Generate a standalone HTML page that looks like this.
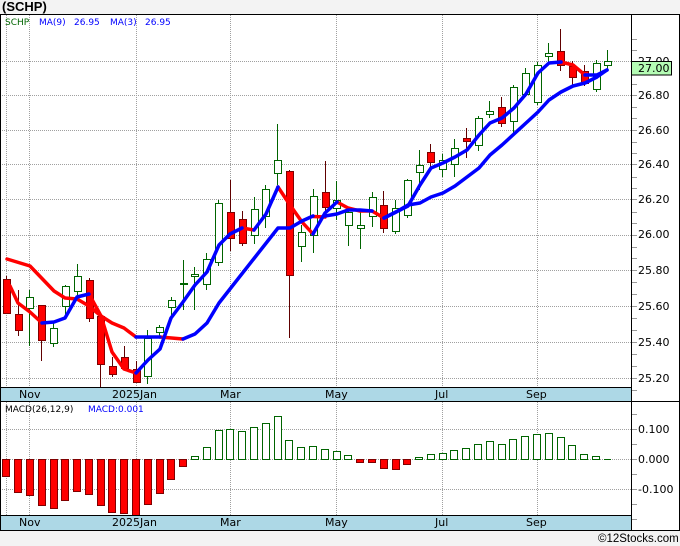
<!DOCTYPE html>
<html><head><meta charset="utf-8"><style>
html,body{margin:0;padding:0;background:#f3f3f3;width:680px;height:546px;overflow:hidden}
svg{display:block}
text{font-family:"DejaVu Sans",sans-serif;font-size:11px;fill:#000}
.s{font-size:9px}
</style></head><body>
<svg width="680" height="546" viewBox="0 0 680 546" xmlns="http://www.w3.org/2000/svg">
<rect width="680" height="546" fill="#f3f3f3"/>
<rect x="0" y="14" width="680" height="516" fill="#fff"/>
<rect x="0" y="388" width="632" height="13" fill="#add8e6"/>
<rect x="0" y="516" width="632" height="14" fill="#add8e6"/>
<path d="M0 61.5H632M0 95.5H632M0 130.5H632M0 164.5H632M0 199.5H632M0 235.5H632M0 270.5H632M0 306.5H632M0 342.5H632M0 378.5H632M0 429.5H632M0 459.5H632M0 489.5H632" stroke="#a0a0a0" stroke-dasharray="1 1" fill="none"/>
<path d="M6.5 15V387M29.5 15V387M136.5 15V387M230.5 15V387M336.5 15V387M442.5 15V387M537.5 15V387M6.5 402V515M29.5 402V515M136.5 402V515M230.5 402V515M336.5 402V515M442.5 402V515M537.5 402V515" stroke="#a0a0a0" stroke-dasharray="1 1" fill="none"/>
<path d="M632 39.5H637M632 50.5H637M632 61.5H637M632 73.5H637M632 84.5H637M632 95.5H637M632 107.5H637M632 118.5H637M632 130.5H637M632 142.5H637M632 153.5H637M632 164.5H637M632 177.5H637M632 188.5H637M632 199.5H637M632 212.5H637M632 223.5H637M632 235.5H637M632 247.5H637M632 258.5H637M632 270.5H637M632 282.5H637M632 294.5H637M632 306.5H637M632 318.5H637M632 330.5H637M632 342.5H637M632 354.5H637M632 366.5H637M632 378.5H637M632 390.5H637M632 414.5H637M632 429.5H637M632 444.5H637M632 459.5H637M632 474.5H637M632 489.5H637M632 504.5H637M632 519.5H637" stroke="#999" fill="none"/>

<!-- wicks -->
<path d="M29.5 290V346M53.5 322V347M65.5 285V316M77.5 264V300M147.5 330V384M159.5 325V337M171.5 297V320M183.5 260V310M194.5 267V310M206.5 253V290M218.5 200V266M254.5 197V244M265.5 185V228M277.5 124V185M301.5 225V262M313.5 189V253M336.5 181V220M348.5 208V246M360.5 212V249M372.5 192V227M395.5 200V234M407.5 179V218M419.5 150V190M442.5 154V177M454.5 139V177M478.5 116V151M489.5 101V118M513.5 85V134M525.5 68V97M537.5 62V105M548.5 43V63M596.5 60V92M607.5 50V69" stroke="#006400" fill="none"/>
<path d="M6.5 276V314M18.5 290V336M41.5 305V361M89.5 278V322M100.5 315V387M112.5 357V377M124.5 346V368M136.5 361V382M230.5 180V251M242.5 211V246M289.5 170V338M325.5 161V217M383.5 191V233M430.5 144V168M466.5 128V158M501.5 97V127M560.5 29V71M572.5 61V85M584.5 65V86" stroke="#600000" fill="none"/>
<!-- green bodies -->
<path d="M26.5 297.5h7v11h-7zM50.5 328.5h7v15h-7zM62.5 286.5h7v20h-7zM74.5 276.5h7v15h-7zM144.5 338.5h7v38h-7zM156.5 327.5h7v5h-7zM168.5 300.5h7v7h-7zM180.5 283.5h7v1h-7zM191.5 274.5h7v2h-7zM203.5 259.5h7v25h-7zM215.5 203.5h7v59h-7zM251.5 209.5h7v26h-7zM262.5 189.5h7v27h-7zM274.5 160.5h7v13h-7zM298.5 232.5h7v14h-7zM310.5 196.5h7v39h-7zM333.5 200.5h7v8h-7zM345.5 212.5h7v13h-7zM357.5 225.5h7v3h-7zM369.5 197.5h7v19h-7zM392.5 208.5h7v23h-7zM404.5 180.5h7v35h-7zM416.5 165.5h7v7h-7zM439.5 160.5h7v9h-7zM451.5 148.5h7v16h-7zM475.5 118.5h7v27h-7zM486.5 111.5h7v3h-7zM510.5 87.5h7v34h-7zM522.5 73.5h7v21h-7zM534.5 65.5h7v37h-7zM545.5 53.5h7v3h-7zM593.5 63.5h7v26h-7zM604.5 61.5h7v4h-7z" fill="#fff" stroke="#006400"/>
<!-- red bodies -->
<path d="M3.5 279.5h7v34h-7zM15.5 314.5h7v16h-7zM38.5 305.5h7v35h-7zM86.5 280.5h7v38h-7zM97.5 316.5h7v48h-7zM109.5 366.5h7v8h-7zM121.5 357.5h7v11h-7zM133.5 369.5h7v13h-7zM227.5 212.5h7v26h-7zM239.5 219.5h7v24h-7zM286.5 171.5h7v104h-7zM322.5 192.5h7v15h-7zM380.5 205.5h7v23h-7zM427.5 152.5h7v10h-7zM463.5 138.5h7v3h-7zM498.5 107.5h7v16h-7zM557.5 51.5h7v14h-7zM569.5 66.5h7v11h-7zM581.5 71.5h7v12h-7z" fill="#f00" stroke="#800000"/>

<!-- moving average lines -->
<g fill="none" stroke-width="3.5" stroke-linejoin="round" stroke-linecap="round">
<path d="M7 259L30 266L54 291L65 298L77 299L89 306L101 316L112 323L124 328L136 337" stroke="#f00"/>
<path d="M160 337L183 339" stroke="#f00"/>
<path d="M313 216.500L325 217" stroke="#f00"/>
<path d="M10 286L18 303L30 312L42 323" stroke="#f00"/>
<path d="M89 294L101 316L112 352L124 369L136 373" stroke="#f00"/>
<path d="M242 228L254 230" stroke="#f00"/>
<path d="M278 187L290 205L302 222L313 234" stroke="#f00"/>
<path d="M337 202L348 208L360 211L372 211L384 218" stroke="#f00"/>
<path d="M561 62L573 65L585 75" stroke="#f00"/>
<path d="M42 323L54 322L65 318L77 297L89 294" stroke="#00f"/>
<path d="M136 337L148 337L160 337" stroke="#00f"/>
<path d="M136 373L148 360L160 349L171 318L183 302L195 285L207 272L219 245L230 234L242 228" stroke="#00f"/>
<path d="M183 339L195 334L207 323L219 303L230 289L278 228L290 228L302 221L313 216" stroke="#00f"/>
<path d="M254 230L266 214L278 187" stroke="#00f"/>
<path d="M313 234L325 213L337 202" stroke="#00f"/>
<path d="M325 216L337 214L348 210L360 210L372 211" stroke="#00f"/>
<path d="M384 218L396 212L408 205L420 203L431 197L443 193L455 186L467 177L479 168L490 155L502 145L514 134L526 123L538 112L549 100L561 92L573 86L585 83L597 77L607 70" stroke="#00f"/>
<path d="M384 218L396 212L408 206L420 185L431 168L443 163L455 157L467 150L479 135L490 123L502 118L514 108L526 94L538 73L549 63L561 62" stroke="#00f"/>
<path d="M585 75L597 75L607 70" stroke="#00f"/>
</g>

<!-- MACD bars -->
<path d="M2.500 459.500h7v17h-7zM14.500 459.500h7v33h-7zM26.500 459.500h7v36h-7zM38.500 459.500h7v46h-7zM50.500 459.500h7v49h-7zM61.500 459.500h7v41h-7zM73.500 459.500h7v32h-7zM85.500 459.500h7v35h-7zM97.500 459.500h7v46h-7zM108.500 459.500h7v53h-7zM120.500 459.500h7v54h-7zM132.500 459.500h7v56h-7zM144.500 459.500h7v45h-7zM156.500 459.500h7v34h-7zM167.500 459.500h7v20h-7zM179.500 459.500h7v7h-7zM356.500 459.500h7v3h-7zM368.500 459.500h7v3h-7zM380.500 459.500h7v9h-7zM392.500 459.500h7v10h-7zM403.500 459.500h7v5h-7z" fill="#f00" stroke="#800000"/>
<path d="M191.500 456.500h7v3h-7zM203.500 447.500h7v12h-7zM215.500 430.500h7v29h-7zM226.500 429.500h7v30h-7zM238.500 431.500h7v28h-7zM250.500 427.500h7v32h-7zM262.500 423.500h7v36h-7zM274.500 416.500h7v43h-7zM285.500 440.500h7v19h-7zM297.500 447.500h7v12h-7zM309.500 446.500h7v13h-7zM321.500 449.500h7v10h-7zM333.500 451.500h7v8h-7zM344.500 455.500h7v4h-7zM415.500 457.500h7v2h-7zM427.500 454.500h7v5h-7zM439.500 453.500h7v6h-7zM450.500 450.500h7v9h-7zM462.500 448.500h7v11h-7zM474.500 444.500h7v15h-7zM486.500 441.500h7v18h-7zM498.500 444.500h7v15h-7zM509.500 439.500h7v20h-7zM521.500 436.500h7v23h-7zM533.500 434.500h7v25h-7zM545.500 433.500h7v26h-7zM557.500 437.500h7v22h-7zM568.500 445.500h7v14h-7zM580.500 454.500h7v5h-7zM592.500 456.500h7v3h-7z" fill="#fff" stroke="#006400"/>
<path d="M604 459.500h7" stroke="#006400"/>

<!-- frame -->
<g fill="#000">
<rect x="0" y="14" width="680" height="1"/>
<rect x="0" y="14" width="1" height="516"/>
<rect x="0" y="387" width="632" height="1"/>
<rect x="0" y="401" width="680" height="1"/>
<rect x="0" y="515" width="632" height="1"/>
<rect x="0" y="530" width="680" height="1"/>
<rect x="631" y="14" width="1" height="516"/>
<rect x="679" y="14" width="1" height="516"/>
</g>

<!-- text -->
<text x="2" y="11" style="font:bold 13px 'Liberation Sans',sans-serif;fill:#000">(SCHP)</text>
<text class="s" x="5" y="25" style="fill:#006400">SCHP</text>
<text class="s" x="39" y="25" style="fill:#0000ff">MA(9)</text>
<text class="s" x="74" y="25" style="fill:#0000ff">26.95</text>
<text class="s" x="110" y="25" style="fill:#0000ff">MA(3)</text>
<text class="s" x="145" y="25" style="fill:#0000ff">26.95</text>

<text x="638" y="65">27.00</text>
<rect x="631.500" y="61.500" width="40" height="13.500" fill="#b4fcb4" stroke="#000"/>
<text x="638" y="72">27.00</text>
<text x="638" y="99">26.80</text>
<text x="638" y="134">26.60</text>
<text x="638" y="168">26.40</text>
<text x="638" y="203">26.20</text>
<text x="638" y="238">26.00</text>
<text x="638" y="274">25.80</text>
<text x="638" y="310">25.60</text>
<text x="638" y="346">25.40</text>
<text x="638" y="382">25.20</text>

<text x="19" y="398">Nov</text>
<text x="112" y="398">2025Jan</text>
<text x="220" y="398">Mar</text>
<text x="325" y="398">May</text>
<text x="435" y="398">Jul</text>
<text x="526" y="398">Sep</text>

<text class="s" x="5" y="412">MACD(26,12,9)</text>
<text class="s" x="88" y="412" style="fill:#0000ff">MACD:0.001</text>

<text x="638" y="433">0.100</text>
<text x="638" y="463">0.000</text>
<text x="638" y="493">-0.100</text>

<text x="19" y="526">Nov</text>
<text x="112" y="526">2025Jan</text>
<text x="220" y="526">Mar</text>
<text x="325" y="526">May</text>
<text x="435" y="526">Jul</text>
<text x="526" y="526">Sep</text>

<text x="598" y="542" style="font:11.500px 'Liberation Sans',sans-serif;fill:#000">©12Stocks.com</text>
</svg>
</body></html>
